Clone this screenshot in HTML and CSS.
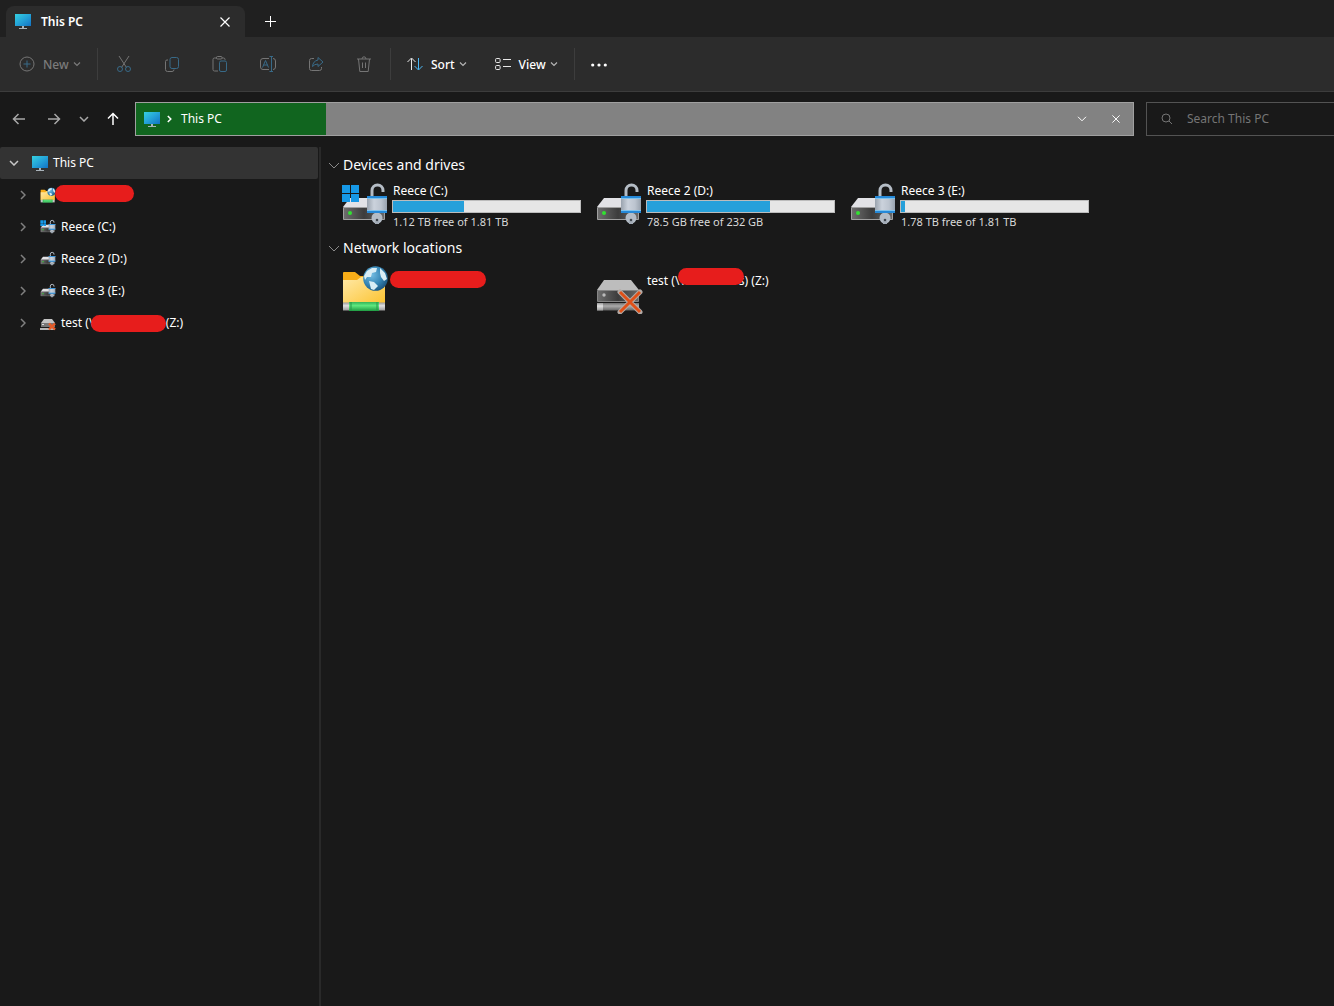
FILE: index.html
```html
<!DOCTYPE html>
<html lang="en">
<head>
<meta charset="utf-8">
<title>This PC</title>
<link rel="stylesheet" href="styles.css">
</head>
<body>
<svg class="sprite" width="0" height="0" aria-hidden="true">
  <defs>
    <linearGradient id="screen" x1="0" y1="0" x2="1" y2="1"><stop offset="0" stop-color="#35d0e0"/><stop offset=".5" stop-color="#24a3d8"/><stop offset="1" stop-color="#1272c4"/></linearGradient>
    <linearGradient id="metal" x1="0" y1="0" x2="1" y2="0"><stop offset="0" stop-color="#9aa3ae"/><stop offset=".35" stop-color="#cbd2dc"/><stop offset=".7" stop-color="#bcc4cf"/><stop offset="1" stop-color="#98a2ae"/></linearGradient>
    <linearGradient id="case" x1="0" y1="0" x2="1" y2="0"><stop offset="0" stop-color="#6e6e6e"/><stop offset=".5" stop-color="#3c3c3c"/><stop offset="1" stop-color="#696969"/></linearGradient>
    <linearGradient id="paper" x1="0" y1="0" x2="1" y2="1"><stop offset="0" stop-color="#ffe9a8"/><stop offset="1" stop-color="#fcc32f"/></linearGradient>
    <linearGradient id="cable" x1="0" y1="0" x2="0" y2="1"><stop offset="0" stop-color="#35b558"/><stop offset=".4" stop-color="#5fe87f"/><stop offset="1" stop-color="#1f9c42"/></linearGradient>
    <linearGradient id="tube" x1="0" y1="0" x2="0" y2="1"><stop offset="0" stop-color="#9a9a9a"/><stop offset=".4" stop-color="#e0e0e0"/><stop offset="1" stop-color="#9a9a9a"/></linearGradient>
    <linearGradient id="greytube" x1="0" y1="0" x2="0" y2="1"><stop offset="0" stop-color="#707070"/><stop offset=".4" stop-color="#ababab"/><stop offset="1" stop-color="#646464"/></linearGradient>
    <radialGradient id="ocean" cx=".35" cy=".35" r=".7"><stop offset="0" stop-color="#73bce2"/><stop offset=".6" stop-color="#3585b5"/><stop offset="1" stop-color="#1c567f"/></radialGradient>
  </defs>
  <symbol id="monitor" viewBox="0 0 16 16"><path d="M0 1h16v12H0z" fill="url(#screen)"/><path d="M7 13h2v2h3v1H4v-1h3z" fill="#a9b3ba"/></symbol>
  <symbol id="drive" viewBox="0 0 48 48">
    <path d="M9 17h30l5 9H2z" fill="#e2e2e6"/><path d="M2.500 26.500h41v12h-41z" fill="url(#case)" stroke="#a0a0a0"/>
    <circle cx="9" cy="32" r="2" fill="#31e231"/>
    <path d="M31 16V9.500a5.500 5.500 0 0 1 11 0V11" fill="none" stroke="#b4bcc5" stroke-width="3"/>
    <circle cx="36" cy="37" r="5.500" fill="#b3bcc6"/><path d="M34 40h4v3h-4z" fill="#a3acb7"/><circle cx="36" cy="39" r="1.300" fill="#40474f"/>
    <path d="M26 15h20v17H26z" fill="url(#metal)"/><path d="M26 15h20v3H26zM26 29h20v3H26z" fill="#2589d8"/><path d="M26 17h20v1H26zM26 29h20v1H26z" fill="#7cc2ee"/>
  </symbol>
  <symbol id="windrive" viewBox="0 0 48 48"><use href="#drive" width="48" height="48"/><path d="M1 4h8v8H1zM10 4h8v8h-8zM1 13h8v8H1zM10 13h8v8h-8z" fill="#1698e6"/></symbol>
  <symbol id="netfolder" viewBox="0 0 48 48">
    <path d="M2 9q0-1 1-1h11l5 4h24q1 0 1 1v26H2z" fill="#f8ad18"/><path d="M2 16h14l4-3h24v27H2z" fill="url(#paper)"/>
    <path d="M2 38.500h42v8H2z" fill="url(#tube)"/><path d="M8 38h30v9H8z" fill="url(#cable)"/><path d="M10 38v9M36 38v9" stroke="#24964a"/>
    <circle cx="34.500" cy="14.500" r="12.300" fill="url(#ocean)"/>
    <path d="M26 7l5-3 5 0-1 4-4 1-1 4-4 0-2 3-1-4zM28 17l5 1 4 4-4 4-3-1-1-4zM39 4l5 5 2 6-3 2-3-4-1-4z" fill="#d9edf5"/>
  </symbol>
  <symbol id="netdrive" viewBox="0 0 48 50">
    <path d="M9 16h27l8 10H2z" fill="#bdbdbd"/><path d="M2.500 26.500h41v11h-41z" fill="url(#case)" stroke="#858585"/><circle cx="9" cy="31" r="1.700" fill="#bbb"/>
    <path d="M2 39h42v7.500H2z" fill="url(#greytube)"/><path d="M2 39h6v7.500H2z" fill="url(#tube)"/>
    <path d="M25 28l20 20M45 28L25 48" stroke="#b4aaa5" stroke-width="5" stroke-linecap="round"/><path d="M25 28l20 20M45 28L25 48" stroke="#df5018" stroke-width="3"/>
  </symbol>
  <symbol id="netdrive-small" viewBox="0 0 16 16">
    <path d="M4 4h8l3 4v3H1V8z" fill="#c4c4c4"/><path d="M1 8h14v4H1z" fill="#777"/><path d="M0 13h15v2H0z" fill="#b5b5b5"/><path d="M2 9h2v1H2z" fill="#ddd"/>
    <path d="M9 8.500l6 6M15 8.500l-6 6" stroke="#e65a26" stroke-width="2.400"/>
  </symbol>
  <symbol id="down" viewBox="0 0 8 8"><path d="M1 2.500l3 3 3-3" fill="none" stroke="currentColor" stroke-width="1.200"/></symbol>
  <symbol id="close" viewBox="0 0 10 10"><path d="M.5.5l9 9M9.500.5l-9 9" fill="none" stroke="currentColor" stroke-width="1.200"/></symbol>
</svg>

<header class="tabstrip" role="tablist">
  <div class="tab" role="tab" aria-selected="true">
    <svg class="i16"><use href="#monitor"/></svg>
    <span class="tab-title">This PC</span>
    <button class="bare" aria-label="Close tab"><svg class="i10"><use href="#close"/></svg></button>
  </div>
  <button class="bare newtab" aria-label="New tab"><svg width="11" height="11"><path d="M5.500 0v11M0 5.500h11" stroke="currentColor"/></svg></button>
</header>

<div class="toolbar" role="toolbar" aria-label="Commands">
  <button class="tool new" disabled>
    <svg class="i16" viewBox="0 0 16 16"><circle cx="8" cy="8" r="7" class="grey"/><path d="M8 4.500v7M4.500 8h7" class="blue"/></svg>
    <span>New</span><svg class="i8"><use href="#down"/></svg>
  </button>
  <span class="sep"></span>
  <button class="cmd" aria-label="Cut" disabled><svg class="i16" viewBox="0 0 16 16"><path d="M3 0l7.500 11.500M13 0L5.500 11.500" class="grey"/><circle cx="4" cy="13" r="2.500" class="blue"/><circle cx="12" cy="13" r="2.500" class="blue"/></svg></button>
  <button class="cmd" aria-label="Copy" disabled><svg class="i16" viewBox="0 0 16 16"><path d="M4 4H3Q1.500 4 1.500 5.500v8q0 2 2 2H8q2 0 2-2" class="grey"/><rect x="6" y="1.500" width="8.500" height="11" rx="2" class="blue"/></svg></button>
  <button class="cmd" aria-label="Paste" disabled><svg class="i16" viewBox="0 0 16 16"><path d="M5 2H2.500Q1 2 1 3.500v10Q1 15 2.500 15H6M10 2h1.500Q13 2 13 3.500V4" class="grey"/><rect x="4.500" y=".5" width="5.500" height="2.500" rx="1" class="grey"/><rect x="7.500" y="5" width="7" height="10.500" rx="1.500" class="blue"/></svg></button>
  <button class="cmd" aria-label="Rename" disabled><svg class="i16" viewBox="0 0 16 16"><path d="M9 2.500H3Q.5 2.500.5 5v6q0 2.500 2.500 2.500h6M13 2.500q2.500 0 2.500 2.500v6q0 2.500-2.500 2.500" class="grey"/><path d="M2.500 11.500L5.500 4.500l3 7M3.500 9h4M9.500.5h3.500M9.500 15.500h3.500M11.500.5v15" class="blue"/></svg></button>
  <button class="cmd" aria-label="Share" disabled><svg class="i16" viewBox="0 0 16 16"><path d="M6 2.500H3.500Q1.500 2.500 1.500 4.500v8q0 2 2 2h8q2 0 2-2V11" class="grey"/><path d="M10 1.500L15 6l-5 4.500V8Q6.500 8 4.500 10.500 5 5 10 4z" class="blue"/></svg></button>
  <button class="cmd" aria-label="Delete" disabled><svg class="i16" viewBox="0 0 16 16"><path d="M1 3h14M2.500 3l1.300 12.500h8.400L13.500 3M6 3Q6 .8 8 .8T10 3M6.500 6.500v5.500M9.500 6.500v5.500" class="grey"/></svg></button>
  <span class="sep"></span>
  <button class="tool">
    <svg class="i16" viewBox="0 0 16 16"><path d="M4.500 14V2.500M.5 6L4.500 2l4 4" class="white"/><path d="M11.500 2v11.500M7.500 10l4 4 4-4" class="bright"/></svg>
    <span>Sort</span><svg class="i8"><use href="#down"/></svg>
  </button>
  <button class="tool">
    <svg class="i16" viewBox="0 0 16 16"><rect x=".6" y="2.500" width="4.500" height="4" rx="1" class="white"/><rect x=".6" y="9.500" width="4.500" height="4" rx="1" class="white"/><path d="M8 3.500h8M8 10.500h8" class="white"/></svg>
    <span>View</span><svg class="i8"><use href="#down"/></svg>
  </button>
  <span class="sep"></span>
  <button class="tool" aria-label="More"><svg class="i16" viewBox="0 0 16 16"><g fill="#fff"><circle cx="1.700" cy="9" r="1.600"/><circle cx="8" cy="9" r="1.600"/><circle cx="14.300" cy="9" r="1.600"/></g></svg></button>
</div>

<div class="navrow">
  <div class="history">
    <button class="bare" aria-label="Back"><svg width="14" height="12"><path d="M13 6H1.500M6.500 1l-5 5 5 5" class="arrow"/></svg></button>
    <button class="bare" aria-label="Forward"><svg width="14" height="12"><path d="M1 6h11.500M7.500 1l5 5-5 5" class="arrow"/></svg></button>
    <button class="bare" aria-label="Recent locations"><svg width="10" height="6"><path d="M1 1l4 4 4-4" class="arrow"/></svg></button>
    <button class="bare" aria-label="Up"><svg width="12" height="14"><path d="M6 13V1.500M1 6.500l5-5 5 5" class="arrow up"/></svg></button>
  </div>
  <div class="address">
    <div class="crumbs">
      <svg class="i16"><use href="#monitor"/></svg>
      <svg width="5" height="8"><path d="M.8 1l3 3-3 3" class="crumb"/></svg>
      <a href="#">This PC</a>
    </div>
    <button class="bare" aria-label="Previous locations"><svg width="10" height="6"><path d="M1 .8l4 4 4-4" fill="none" stroke="#fff"/></svg></button>
    <button class="bare" aria-label="Stop"><svg class="i8" viewBox="0 0 10 10"><use href="#close"/></svg></button>
  </div>
  <label class="search">
    <svg width="12" height="12"><circle cx="5" cy="5" r="4" class="lens"/><path d="M8 8l3 3" class="lens"/></svg>
    <input type="search" placeholder="Search This PC" aria-label="Search This PC">
  </label>
</div>

<div class="panes">
  <nav class="sidebar" aria-label="Folders">
    <a class="node root" href="#"><svg width="10" height="6"><path d="M1 1l4 4 4-4" class="twist"/></svg><svg class="i16"><use href="#monitor"/></svg><span>This PC</span></a>
    <a class="node" href="#" aria-label="Network folder"><svg width="6" height="10"><path d="M1 1l4 4-4 4" class="twist"/></svg><svg class="i16"><use href="#netfolder"/></svg><span class="redact side-folder"></span></a>
    <a class="node" href="#"><svg width="6" height="10"><path d="M1 1l4 4-4 4" class="twist"/></svg><svg class="i16"><use href="#windrive"/></svg><span>Reece (C:)</span></a>
    <a class="node" href="#"><svg width="6" height="10"><path d="M1 1l4 4-4 4" class="twist"/></svg><svg class="i16"><use href="#drive"/></svg><span>Reece 2 (D:)</span></a>
    <a class="node" href="#"><svg width="6" height="10"><path d="M1 1l4 4-4 4" class="twist"/></svg><svg class="i16"><use href="#drive"/></svg><span>Reece 3 (E:)</span></a>
    <a class="node" href="#"><svg width="6" height="10"><path d="M1 1l4 4-4 4" class="twist"/></svg><svg class="i16"><use href="#netdrive-small"/></svg><span class="share">test (\\<span class="redact side-share"></span>(Z:)</span></a>
  </nav>

  <main class="content">
    <section>
      <h2><svg width="12" height="7"><path d="M1 1l5 5 5-5" class="fold"/></svg>Devices and drives</h2>
      <div class="tiles">
        <article class="tile"><svg class="i48"><use href="#windrive"/></svg><div class="info"><h3>Reece (C:)</h3><div class="meter"><div class="used" style="width:38%"></div></div><p>1.12 TB free of 1.81 TB</p></div></article>
        <article class="tile"><svg class="i48"><use href="#drive"/></svg><div class="info"><h3>Reece 2 (D:)</h3><div class="meter"><div class="used" style="width:66%"></div></div><p>78.5 GB free of 232 GB</p></div></article>
        <article class="tile"><svg class="i48"><use href="#drive"/></svg><div class="info"><h3>Reece 3 (E:)</h3><div class="meter"><div class="used" style="width:2%"></div></div><p>1.78 TB free of 1.81 TB</p></div></article>
      </div>
    </section>
    <section>
      <h2><svg width="12" height="7"><path d="M1 1l5 5 5-5" class="fold"/></svg>Network locations</h2>
      <div class="tiles network">
        <article class="tile"><svg class="i48"><use href="#netfolder"/></svg><div class="info"><span class="redact tile-folder"></span></div></article>
        <article class="tile"><svg class="i48 tall"><use href="#netdrive"/></svg><div class="info"><h3 class="share">test (\\<span class="redact tile-share"></span>s) (Z:)</h3></div></article>
      </div>
    </section>
  </main>
</div>
</body>
</html>
```
FILE: styles.css
```css
* { box-sizing: border-box; }
body {
  margin: 0;
  min-height: 100vh;
  display: flex;
  flex-direction: column;
  background: #191919;
  color: #fff;
  font: 12px/16px "Noto Sans", "Open Sans", sans-serif;
  overflow-x: hidden;
}
svg { display: block; flex: none; }
a { color: inherit; text-decoration: none; }
button { font: inherit; color: inherit; background: none; border: 0; padding: 0; }
h2, h3, p { margin: 0; font-weight: 400; }
.sprite { position: absolute; }
.i8 { width: 8px; height: 8px; }
.i10 { width: 10px; height: 10px; }
.i16 { width: 16px; height: 16px; }
.i48 { width: 48px; height: 48px; }
.i48.tall { height: 50px; }
.bare { display: flex; align-items: center; justify-content: center; }

/* Tabs */
.tabstrip { display: flex; height: 37px; padding: 6px 0 0 6px; background: #202020; }
.tab {
  display: flex;
  align-items: center;
  width: 239px;
  padding: 0 15px 0 9px;
  gap: 10px;
  background: #2c2c2c;
  border-radius: 8px 8px 0 0;
}
.tab-title { flex: 1; font-weight: 600; }
.tab .i16 { margin-bottom: 2px; }
.newtab { width: 51px; }

/* Command bar */
.toolbar {
  display: flex;
  align-items: center;
  height: 55px;
  background: #2c2c2c;
  border-bottom: 1px solid #3c3c3c;
}
.tool { display: flex; align-items: center; gap: 8px; height: 32px; padding: 0 12px 0 16px; font-weight: 500; }
.tool span { padding-top: 2px; }
.tool .i8 { color: #b5b5b5; margin-left: -4px; }
.tool.new { width: 93px; padding-left: 19px; color: #7b7b7b; }
.tool.new .i8 { color: #7b7b7b; }
.cmd { display: flex; align-items: center; justify-content: center; width: 48px; height: 32px; }
.sep { width: 1px; height: 32px; background: #3d3d3d; }
.tool + .sep { margin-left: 4px; }
.sep + .cmd { margin-left: 2px; }
.cmd + .sep { margin-left: 2px; }
.grey { fill: none; stroke: #757575; }
.blue { fill: none; stroke: #386a88; }
.white { fill: none; stroke: #e8e8e8; }
.bright { fill: none; stroke: #4cb8f5; }

/* Address row */
.navrow { display: flex; align-items: center; height: 55px; padding-bottom: 2px; }
.history { display: grid; grid-template-columns: 38px 32px 28px 30px; height: 34px; margin-right: 7px; }
.arrow { fill: none; stroke: #a8a8a8; stroke-width: 1.5; }
.arrow.up { stroke: #fff; }
.address {
  flex: 1;
  display: grid;
  grid-template-columns: 190px 1fr 34px 34px;
  height: 34px;
  background: #828282;
  border: 1px solid #a0a0a0;
}
.address .bare:nth-child(2) { grid-column: 3; }
.crumbs { display: flex; align-items: center; gap: 7px; padding-left: 8px; background: #11651f; }
.crumbs a { padding-left: 2px; }
.crumb { fill: none; stroke: #fff; stroke-width: 1.5; }
.search {
  display: flex;
  align-items: center;
  gap: 14px;
  width: 188px;
  height: 34px;
  margin-left: 12px;
  padding-left: 14px;
  border: 1px solid #535353;
  border-right: 0;
}
.search input { flex: 1; min-width: 0; padding: 0; border: 0; background: none; color: #fff; font: inherit; outline: 0; }
.search input::placeholder { color: #757575; opacity: 1; }
.lens { fill: none; stroke: #757575; }

/* Panes */
.panes { flex: 1; display: grid; grid-template-columns: 321px 1fr; }
.sidebar { border-right: 2px solid #292929; padding-right: 1px; }
.node { display: flex; align-items: center; height: 32px; padding-left: 20px; }
.node > .i16 { margin: 0 5px 0 14px; }
.node.root { padding-left: 9px; background: #333; border-radius: 2px; }
.node.root > .i16 { margin-left: 13px; }
.twist { fill: none; stroke: #808080; stroke-width: 1.5; }
.root .twist { stroke: #c8c8c8; }
.share { display: flex; align-items: center; white-space: nowrap; }
.redact { display: block; height: 17px; border-radius: 9px; background: #e71d1c; position: relative; }
.side-folder { width: 79px; margin: 0 0 3px -6px; }
.side-share { width: 75px; margin-left: -7px; }
.content { padding: 3px 0 0 7px; }
h2 { display: flex; align-items: center; gap: 3px; height: 30px; font-size: 14px; line-height: 20px; }
.fold { fill: none; stroke: #8a8a8a; }
.tiles { display: grid; grid-template-columns: repeat(auto-fill, 254px); padding-left: 13px; }
.tile { display: flex; gap: 3px; height: 53px; }
.tile .i48 { margin-top: 1px; }
.info { flex: 1; padding: 3px 14px 0 0; }
.info h3, .info p { font-size: 12px; line-height: 16px; padding-left: 1px; }
.info p { font-size: 11px; color: #d8d8d8; }
.meter { height: 13px; margin: 1px 0; background: #e6e6e6; border: 1px solid #bcbcbc; }
.used { height: 100%; background: #26a0da; }
.network .info { padding-top: 8px; }
.tile-folder { width: 96px; margin-left: -2px; }
.tile-share { width: 66px; margin: -3px -5px 5px -6px; }
```
